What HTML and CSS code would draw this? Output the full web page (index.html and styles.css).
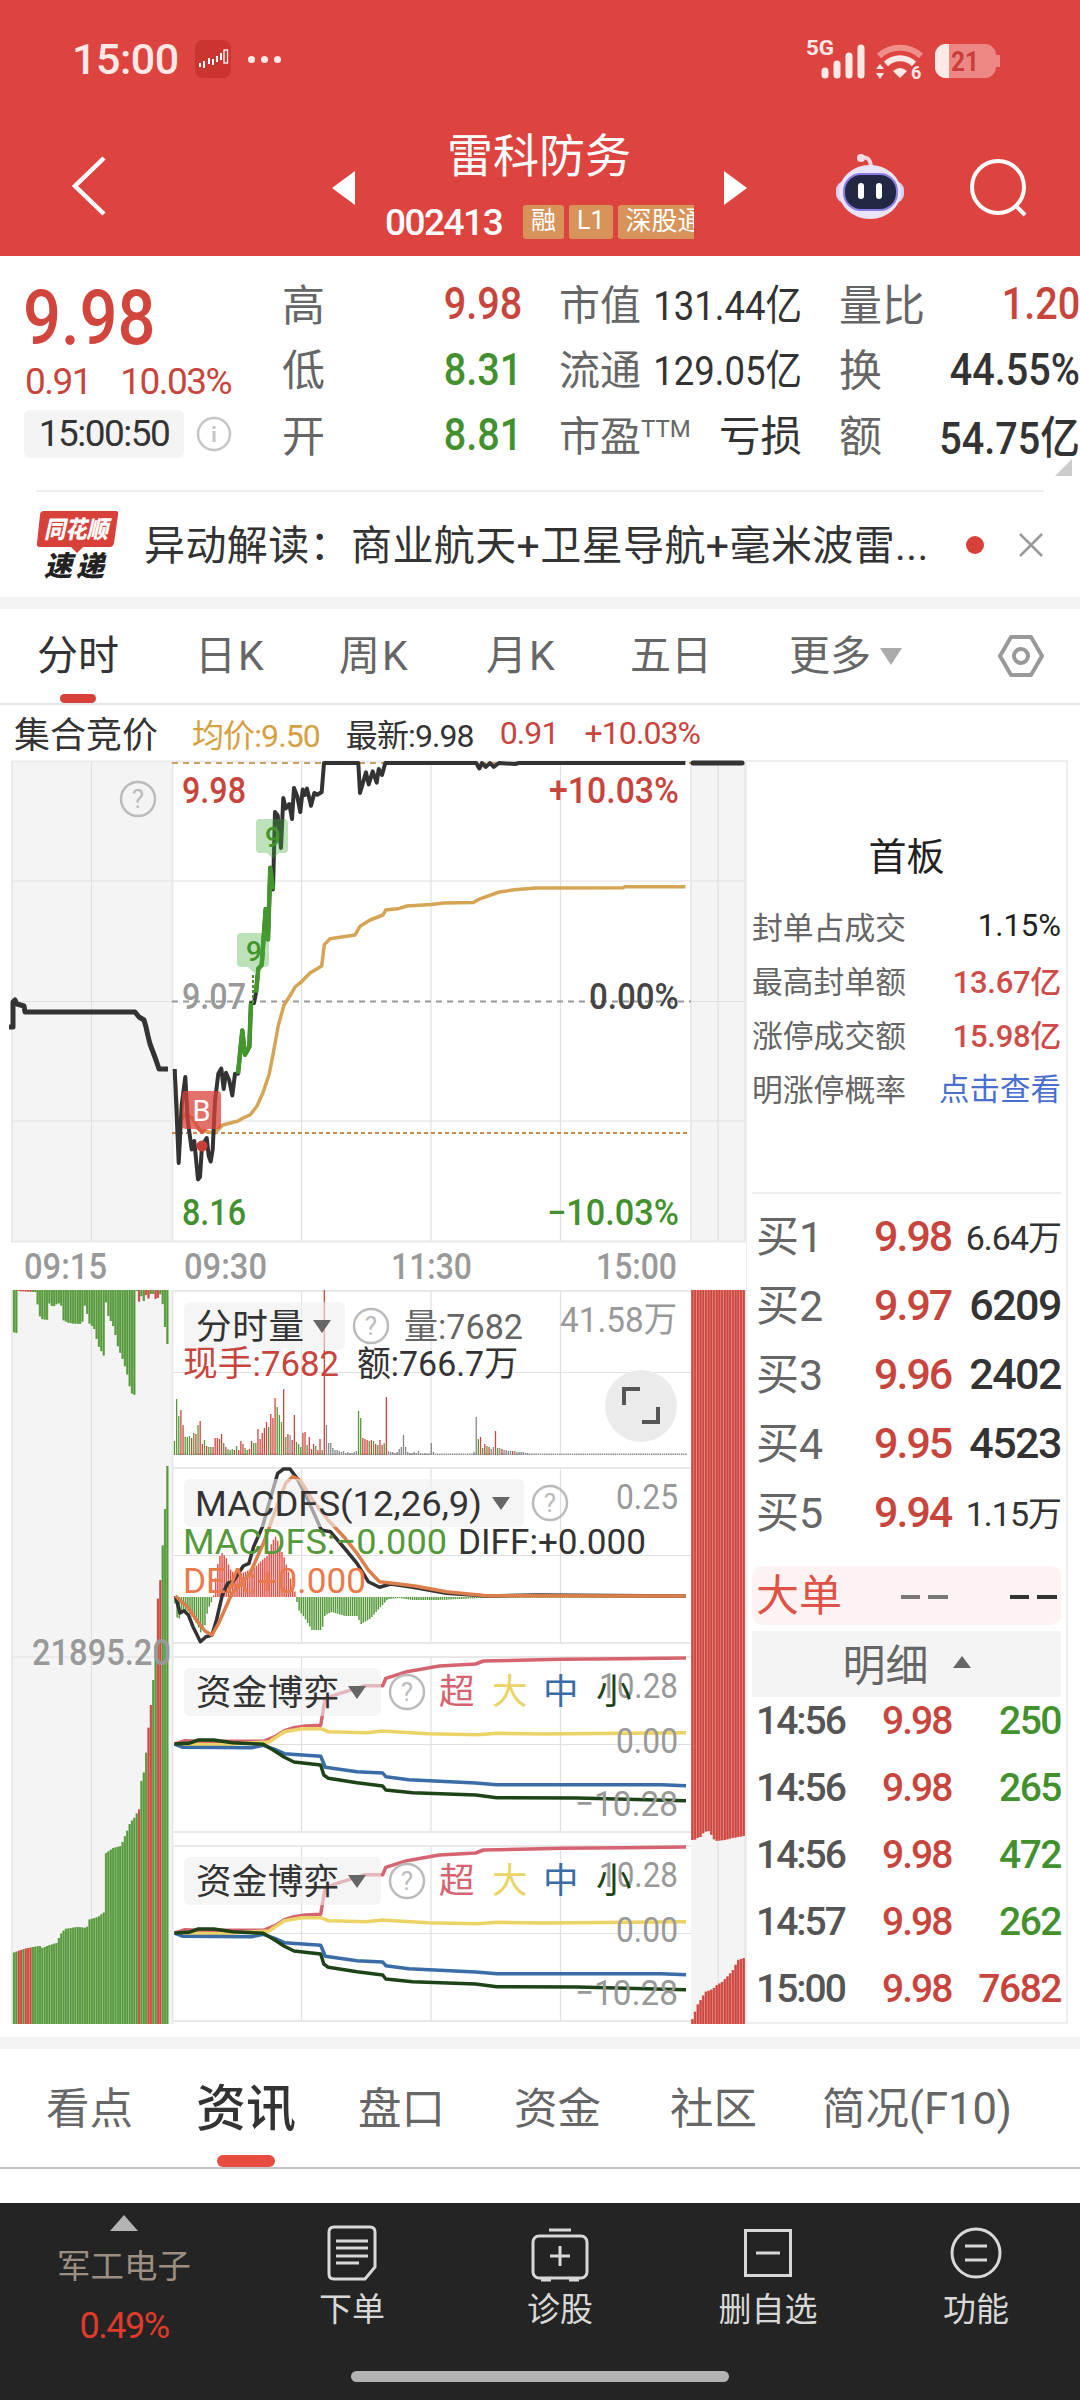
FILE: index.html
```html
<!DOCTYPE html>
<html lang="zh-CN">
<head>
  <meta charset="UTF-8">
  <meta name="viewport" content="width=device-width, initial-scale=1.0">
  <title>雷科防务 002413</title>
  <link rel="stylesheet" href="styles.css">
</head>
<body>
  <header class="header">
    <div class="status">
      <span class="clock">15:00</span>
      <svg class="app-icon" width="36" height="38" viewBox="0 0 36 38">
        <rect width="36" height="38" rx="8" fill="#cb352f"/>
        <path d="M5 23v4M9 21v7M14 18v6M18 19v6M22 16v6M26 13v7" stroke="#fff" stroke-width="2"/>
        <rect x="29" y="10" width="3.500" height="13" fill="none" stroke="#fff" stroke-width="1.300"/>
      </svg>
      <span class="dots"><i></i><i></i><i></i></span>
      <svg class="signals" width="200" height="46" viewBox="804 34 200 46">
        <text x="806" y="53" font-size="21" font-weight="700" fill="#ffe9e7" textLength="28" lengthAdjust="spacingAndGlyphs">5G</text>
        <path d="M825 69v4M837 62v11M849 54v19M861 46v27" stroke="#ffe9e7" stroke-width="7" stroke-linecap="round"/>
        <path d="M879 54a31 31 0 0 1 42 0" stroke="#ee8f8c" stroke-width="6" fill="none"/>
        <path d="M886 62a20 20 0 0 1 28 0" stroke="#ffe9e7" stroke-width="6" fill="none"/>
        <path d="M893 69q7-6 14 0l-7 7zM876 67l4-5 4 5zM876 71l4 6 4-6z" fill="#ffe9e7"/>
        <text x="911" y="77" font-size="18" font-weight="700" fill="#ffe9e7">6</text>
        <path d="M946 42h39a11 11 0 0 1 11 11h4v12h-4a11 11 0 0 1-11 11h-39a11 11 0 0 1-11-11V53a11 11 0 0 1 11-11z" fill="#ed8783"/>
        <path d="M949 42v34h-3a11 11 0 0 1-11-11V53a11 11 0 0 1 11-11z" fill="#ffe9e7"/>
        <text x="951" y="69" font-size="28" font-weight="700" fill="#c93e3a" textLength="28" lengthAdjust="spacingAndGlyphs">21</text>
      </svg>
    </div>
    <div class="title-bar">
      <svg class="back" width="40" height="64" viewBox="0 0 40 64"><path d="M34 4L5 32l29 28" fill="none" stroke="#fff" stroke-width="4.500"/></svg>
      <svg class="prev" width="24" height="34" viewBox="0 0 24 34"><path d="M23 0v34L0 17z" fill="#fff"/></svg>
      <div class="stock">
        <h1>雷科防务</h1>
        <div class="stock-sub">
          <span class="code">002413</span>
          <span class="tags"><b>融</b><b>L1</b><b>深股通</b></span>
        </div>
      </div>
      <svg class="next" width="24" height="34" viewBox="0 0 24 34"><path d="M0 0v34l23-17z" fill="#fff"/></svg>
      <svg class="robot" width="70" height="70" viewBox="0 0 70 70">
        <path d="M26 7q9-3 10 9" stroke="#f3d3e0" stroke-width="4" fill="none"/>
        <circle cx="26" cy="7" r="4" fill="#f6dce4"/>
        <rect x="1" y="30" width="68" height="22" rx="9" fill="#d9d0f6"/>
        <ellipse cx="35" cy="41" rx="31" ry="27" fill="#e9e4fb"/>
        <rect x="9" y="23" width="53" height="36" rx="17" fill="#202844" stroke="#8b7be6" stroke-width="2"/>
        <path d="M26 35v10M44 35v10" stroke="#fff" stroke-width="6" stroke-linecap="round"/>
      </svg>
      <svg class="search" width="62" height="62" viewBox="0 0 62 62">
        <circle cx="30" cy="29" r="26" fill="none" stroke="#fff" stroke-width="4"/>
        <path d="M47 47l10 10" stroke="#fff" stroke-width="4"/>
      </svg>
    </div>
  </header>

  <section class="quote">
    <div class="price-col">
      <div class="price"><span class="num">9.98</span></div>
      <div class="change"><span>0.91</span><span>10.03%</span></div>
      <div class="time-row">
        <span class="time">15:00:50</span>
        <svg width="36" height="36" viewBox="0 0 36 36"><circle cx="18" cy="18" r="16" fill="none" stroke="#c6c6c6" stroke-width="2.500"/><path d="M18 15v11M18 10v3" stroke="#c6c6c6" stroke-width="3"/></svg>
      </div>
    </div>
    <div class="stats">
      <span class="k">高</span><span class="v red"><span class="num">9.98</span></span>
      <span class="k s">市值</span><span class="v m"><span class="num">131.44亿</span></span>
      <span class="k">量比</span><span class="v red"><span class="num">1.20</span></span>
      <span class="k">低</span><span class="v green"><span class="num">8.31</span></span>
      <span class="k s">流通</span><span class="v m"><span class="num">129.05亿</span></span>
      <span class="k">换</span><span class="v"><span class="num">44.55%</span></span>
      <span class="k">开</span><span class="v green"><span class="num">8.81</span></span>
      <span class="k s">市盈<sup>TTM</sup></span><span class="v m">亏损</span>
      <span class="k">额</span><span class="v"><span class="num">54.75亿</span></span>
    </div>
    <i class="corner"></i>
  </section>

  <section class="news">
    <svg width="84" height="70" viewBox="0 0 84 70">
      <path d="M8 1h72q3 0 2 4l-4 28q-1 4-4 4H47l-6 6-6-6H4q-4 0-3-4L4 5q0-4 4-4z" fill="#d8403a"/>
      <text x="8" y="28" font-size="24" font-weight="900" fill="#fff" font-style="italic" textLength="64" lengthAdjust="spacingAndGlyphs">同花顺</text>
      <text x="8" y="66" font-size="28" font-weight="900" fill="#222" font-style="italic" textLength="60">速递</text>
    </svg>
    <p>异动解读：商业航天+卫星导航+毫米波雷...</p>
    <i class="dot"></i>
    <svg class="close" width="26" height="26" viewBox="0 0 26 26"><path d="M2 2l22 22M24 2L2 24" stroke="#999" stroke-width="2.500"/></svg>
  </section>

  <nav class="periods">
    <span class="active">分时</span><span>日K</span><span>周K</span><span>月K</span><span>五日</span><span>更多<i></i></span>
    <svg width="46" height="46" viewBox="0 0 46 46"><path d="M13 4h20l11 19-11 19H13L2 23z" fill="none" stroke="#999" stroke-width="4" stroke-linejoin="round"/><circle cx="23" cy="23" r="7" fill="none" stroke="#999" stroke-width="4"/></svg>
  </nav>

  <div class="legend">
    <span class="auction">集合竞价</span><span class="avg">均价:9.50</span><span>最新:9.98</span><span class="red">0.91</span><span class="red">+10.03%</span>
  </div>

  <main class="board">
    <svg class="chart" width="746" height="1264" viewBox="0 760 746 1264">
      <!-- panel backgrounds and grid -->
      <path d="M11 761h161v481H11zM691 761h55v481h-55zM11 1290h161v734H11zM691 1290h55v734h-55z" fill="#f4f4f4"/>
      <g stroke="#e0e0e0" stroke-width="1.200">
        <path d="M91.500 762v480M301.500 762v480M431 762v480M560.500 762v480M718 762v480M91.500 1290v734M718 1290v734"/>
        <path d="M11 881h735M11 1121h735M11 1001.500h161M690 1001.500h56M172 1372.500h519M172 1555.500h519M11 1657h161M172 1744.500h519M172 1933.500h519"/>
        <path d="M301.500 1290v165M431 1290v165M560.500 1290v165M301.500 1468v175M431 1468v175M560.500 1468v175M301.500 1657v175M431 1657v175M560.500 1657v175M301.500 1846v175M431 1846v175M560.500 1846v175"/>
      </g>
      <g stroke="#e9e9e9" stroke-width="2" fill="none">
        <path d="M11 761.500h735M11 1241.500h735M12 761v481M172.500 761v481M691 761v481M745 761v481"/>
        <path d="M12 1290v734M172.500 1290v734M745 1290v734M172 1291h519M172 1468h519M172 1643h519M172 1657h519M172 1832h519M172 1846h519M172 2021h519"/>
      </g>
      <g id="bars"></g>

      <!-- intraday -->
      <path d="M172 763h519" stroke="#c9a063" stroke-width="2" stroke-dasharray="6 5"/>
      <path d="M172 1001.500h519" stroke="#999" stroke-width="2" stroke-dasharray="6 5"/>
      <path d="M172 1133h517" stroke="#cc8a4c" stroke-width="2" stroke-dasharray="4 3"/>
      <g fill="none" stroke-linejoin="round">
        <path stroke="#333" stroke-width="5" d="M9 1027h4v-25l2-2 2 4 7 2 1 6h110l4 5 5 3 2 7 2 9 2 8 3 8 3 8 3 9h9"/>
        <path stroke="#d6a455" stroke-width="3.500" d="M174.700 1069L178.700 1130 181.700 1120 185 1114 192 1118 200 1130.500 215 1133 222.700 1125 238 1121 243 1118 250 1115 257 1106 263 1092.600 269.300 1073.700 273.300 1053 278.300 1025.500 284 1005 291.700 993 295 987 300.700 982.400 310 973 321.700 966 324.300 944.600 330 938.700 355 935 360 926.300 370 920 383 915 385.700 910 399.400 908.400 406.800 906 431 904.600 444 903 473.400 902.500 480 898.800 499.300 892 514 889.800 536 888 623 887.700 625 886.700 685.400 886.700"/>
        <path stroke="#333" stroke-width="4" d="M174.700 1069L178.700 1163 181.700 1105 185.300 1077 187.700 1120 191.700 1149.500 194.300 1141 198 1179.400 200 1177 202 1146 206.700 1138 208.700 1156 210.700 1161.500 212.700 1149.500 215 1101 218.300 1073.700 221.300 1068.500 223.700 1089 226 1072.700 229.300 1080.600 232.300 1095.400 235 1073.700 238 1073.700 242.300 1030.600 245 1054.800 249.300 1046.800 251 1003 254 1003 256 992.800 258.300 968.700 261.700 965 265.700 909 268 939.400 270.300 867.800 273 889.500 275 812 277.700 815.400 281 848 283.300 798 285.700 808.500 289.300 804 292 819 294 788 297.300 796.500 300.300 812 302.700 789.600 305 795 307 788.600 311 805.800 314.300 793 317.300 794.800 321.700 792 324 763 358.300 763 360 793 366 772.400 368.700 784.400 372.700 771.300 376.700 782.700 378.700 769 382 775 385.300 763 476.300 763 479.300 768.500 482 763 485.600 767 490 763 493.700 767 499 763 515 764 519 763 685.400 763"/>
        <path stroke="#43962c" stroke-width="4.500" d="M238 1073.700L242.300 1030.600 245 1054.800 249.300 1046.800 251 1003M256 992.800L258.300 968.700 261.700 965 265.700 909 268 939.400 270.300 867.800 273 889.500"/>
        <path stroke="#333" stroke-width="5" stroke-linecap="round" d="M693 763h49"/>
        <path stroke="#43962c" stroke-width="2" stroke-dasharray="3 2" d="M253 975v28"/>
      </g>
      <path d="M260 819h24q4 0 4 4v26q0 4-4 4h-5l-6 6-6-6h-7q-4 0-4-4v-26q0-4 4-4zM241 933h24q4 0 4 4v26q0 4-4 4h-5l-6 6-6-6h-7q-4 0-4-4v-26q0-4 4-4z" fill="#43a935" opacity=".35"/>
      <g font-size="28" font-weight="500" fill="#43962c"><text x="265" y="847">9</text><text x="246" y="961">9</text></g>
      <path d="M186 1091h31q4 0 4 4v30q0 4-4 4h-9l-6 5-6-5h-10q-4 0-4-4v-30q0-4 4-4z" fill="#d8403a" opacity=".75"/>
      <circle cx="202" cy="1146" r="5.500" fill="#c93e38"/>
      <text x="192.500" y="1121" font-size="29" fill="#fff">B</text>

      <g class="lbl axis">
        <text x="182" y="803" textLength="64" lengthAdjust="spacingAndGlyphs" fill="#c8453d">9.98</text>
        <text x="549" y="803" textLength="130" lengthAdjust="spacingAndGlyphs" fill="#c8453d">+10.03%</text>
        <text x="182" y="1009" textLength="64" lengthAdjust="spacingAndGlyphs" fill="#999">9.07</text>
        <text x="589" y="1009" textLength="90" lengthAdjust="spacingAndGlyphs" fill="#444">0.00%</text>
        <text x="182" y="1225" textLength="64" lengthAdjust="spacingAndGlyphs" fill="#43902f">8.16</text>
        <text x="547" y="1225" textLength="132" lengthAdjust="spacingAndGlyphs" fill="#43902f">−10.03%</text>
        <text x="24" y="1279" textLength="83" lengthAdjust="spacingAndGlyphs" fill="#999">09:15</text>
        <text x="184" y="1279" textLength="83" lengthAdjust="spacingAndGlyphs" fill="#999">09:30</text>
        <text x="391" y="1279" textLength="81" lengthAdjust="spacingAndGlyphs" fill="#999">11:30</text>
        <text x="596" y="1279" textLength="81" lengthAdjust="spacingAndGlyphs" fill="#999">15:00</text>
        <text x="32" y="1665" textLength="139" lengthAdjust="spacingAndGlyphs" fill="#999">21895.20</text>
      </g>

      <!-- MACD curves -->
      <g fill="none" stroke-width="3.500" stroke-linejoin="round">
        <path stroke="#333" d="M175.400 1596L180 1613 184 1610.700 188.400 1615 193 1626.700 200.400 1641.700 206 1636.700 212 1635 216.500 1620 222.300 1595 227.700 1583.300 233 1581.700 243.300 1566 249 1563.300 253.600 1546.700 262.500 1526.700 270 1500 277.700 1473.300 283.500 1469 290 1469 297 1478.300 308 1500 321.400 1530 330.400 1531.700 346 1550 357 1563.300 368.300 1581.700 379.500 1587.300 390.600 1584 413 1587.300 446.400 1593.300 486.600 1596 535.700 1595 685.700 1596"/>
        <path stroke="#dd7f4c" d="M175.400 1596L187.500 1606.700 198.700 1623.300 205 1631 212 1635 218.800 1623 232 1593.300 250 1573.300 263.400 1543.300 276.800 1506.700 285.700 1483.300 292.400 1476.700 300 1480 312.500 1500 328 1520 343.800 1536.700 357 1553.300 368.300 1570 379.500 1581.700 393 1583.300 415 1586 446.400 1591.700 486.600 1595.700 685.700 1596"/>
      </g>

      <!-- fund flow curves, shared by both panels -->
      <g id="flow" fill="none" stroke-width="3.500" stroke-linejoin="round">
        <path stroke="#d66470" d="M174.500 1744L185 1740.700 198 1741.300 263.300 1741.300 274.800 1736.700 284.400 1730.700 294 1727.700 305.400 1726 320.700 1725.300 323.800 1706.700 325.300 1698.300 340 1693.300 364.700 1685.700 382.700 1685.700 385.800 1678.300 406.800 1671.700 439.400 1666 475.700 1664 483.400 1661 561.800 1659.300 623 1658.700 686 1658"/>
        <path stroke="#ecd365" d="M174.500 1744L217.400 1744.700 269 1742 284.400 1731.700 301.600 1728.700 320.700 1728.700 328.400 1731.700 366.700 1732.700 382 1731 428 1733.700 477.600 1734.700 496.800 1733.300 543 1734 686 1732.700"/>
        <path stroke="#3a6ca8" d="M174.500 1744L183 1747.300 251.800 1747.700 263.300 1745.300 274.800 1749.300 284.400 1753.700 320.700 1756.300 325.300 1767.300 357 1771.700 382.700 1773 385.800 1776.700 408.800 1779.700 475.700 1783 496.800 1784.700 661.300 1784.700 686 1785.700"/>
        <path stroke="#1e4318" d="M174.500 1744L188.700 1743.300 198.300 1740 213.600 1740 232.700 1742.700 263.300 1744.300 274.800 1751 284.400 1757.300 294 1762 320.700 1765 323.800 1775 328.400 1778.300 357 1782.700 382.700 1786 385.800 1790 412.600 1792.700 475.700 1795 496.800 1797.700 577 1798 686 1800.700"/>
      </g>
      <use href="#flow" y="189"/>

      <!-- indicator selectors -->
      <g fill="#eee" fill-opacity=".6">
        <rect x="184" y="1302" width="161" height="48" rx="6"/>
        <rect x="184" y="1479" width="340" height="48" rx="6"/>
        <rect x="184" y="1668" width="197" height="48" rx="6"/>
        <rect x="184" y="1857" width="197" height="48" rx="6"/>
      </g>
      <path d="M313 1320h18l-9 13zM492 1497h18l-9 13zM348 1686h18l-9 13zM348 1875h18l-9 13z" fill="#666"/>
      <g fill="none" stroke="#bbb" stroke-width="2.500">
        <circle cx="138" cy="799" r="17"/><circle cx="371" cy="1326" r="17"/><circle cx="550" cy="1503" r="17"/><circle cx="407" cy="1692" r="17"/><circle cx="407" cy="1881" r="17"/>
      </g>
      <g font-size="26" fill="#bbb" text-anchor="middle">
        <text x="138" y="808">?</text><text x="371" y="1335">?</text><text x="550" y="1512">?</text><text x="407" y="1701">?</text><text x="407" y="1890">?</text>
      </g>
      <g class="lbl">
        <text x="196" y="1339" textLength="108" fill="#333">分时量</text>
        <text x="404" y="1339" textLength="119" lengthAdjust="spacingAndGlyphs" fill="#666">量:7682</text>
        <text x="560" y="1332" textLength="117" lengthAdjust="spacingAndGlyphs" fill="#999">41.58万</text>
        <text x="183" y="1376" textLength="156" lengthAdjust="spacingAndGlyphs" fill="#c8453d">现手:7682</text>
        <text x="357" y="1376" textLength="161" lengthAdjust="spacingAndGlyphs" fill="#333">额:766.7万</text>
        <text x="195" y="1516" textLength="287" lengthAdjust="spacingAndGlyphs" fill="#333">MACDFS(12,26,9)</text>
        <text x="616" y="1509" textLength="62" lengthAdjust="spacingAndGlyphs" fill="#999">0.25</text>
        <text x="183" y="1554" textLength="264" lengthAdjust="spacingAndGlyphs" fill="#55993a">MACDFS:−0.000</text>
        <text x="458" y="1554" textLength="188" lengthAdjust="spacingAndGlyphs" fill="#333">DIFF:+0.000</text>
        <text x="183" y="1593" textLength="183" lengthAdjust="spacingAndGlyphs" fill="#ea7a4b">DEA:+0.000</text>
      </g>
      <g id="flow-text" class="lbl">
        <text x="196" y="1705" textLength="143" fill="#333">资金博弈</text>
        <text x="599" y="1698" textLength="79" lengthAdjust="spacingAndGlyphs" fill="#999">10.28</text>
        <text x="616" y="1753" textLength="62" lengthAdjust="spacingAndGlyphs" fill="#999">0.00</text>
        <text x="575" y="1816" textLength="103" lengthAdjust="spacingAndGlyphs" fill="#999">−10.28</text>
        <text x="439" y="1704" fill="#d66470">超</text>
        <text x="492" y="1704" fill="#ecd365">大</text>
        <text x="543" y="1704" fill="#3a6ca8">中</text>
        <text x="596" y="1704" fill="#1e4318">小</text>
      </g>
      <use href="#flow-text" y="189"/>
      <circle cx="641" cy="1406" r="36" fill="#ebebeb"/>
      <path d="M640 1389h-16v16M642 1422h16v-15" fill="none" stroke="#555" stroke-width="4"/>
    </svg>

    <aside class="side">
      <h2>首板</h2>
      <dl>
        <div><dt>封单占成交</dt><dd>1.15%</dd></div>
        <div><dt>最高封单额</dt><dd class="red">13.67亿</dd></div>
        <div><dt>涨停成交额</dt><dd class="red">15.98亿</dd></div>
        <div><dt>明涨停概率</dt><dd class="link">点击查看</dd></div>
      </dl>
      <div class="bids">
        <div><span>买1</span><b>9.98</b><em class="wan">6.64万</em></div>
        <div><span>买2</span><b>9.97</b><em>6209</em></div>
        <div><span>买3</span><b>9.96</b><em>2402</em></div>
        <div><span>买4</span><b>9.95</b><em>4523</em></div>
        <div><span>买5</span><b>9.94</b><em class="wan">1.15万</em></div>
      </div>
      <div class="big-order"><span>大单</span><i class="dash"></i><i class="dash dark"></i></div>
      <div class="detail-head">明细<i></i></div>
      <div class="ticks">
        <div><span>14:56</span><b>9.98</b><em class="green">250</em></div>
        <div><span>14:56</span><b>9.98</b><em class="green">265</em></div>
        <div><span>14:56</span><b>9.98</b><em class="green">472</em></div>
        <div><span>14:57</span><b>9.98</b><em class="green">262</em></div>
        <div><span>15:00</span><b>9.98</b><em class="red">7682</em></div>
      </div>
    </aside>
  </main>

  <nav class="sections">
    <span>看点</span><span class="active">资讯</span><span>盘口</span><span>资金</span><span>社区</span><span>简况(F10)</span>
  </nav>

  <footer class="toolbar">
    <div class="index"><i></i><span>军工电子</span><b>0.49%</b></div>
    <div class="item">
      <svg width="60" height="60" viewBox="0 0 60 60"><path d="M12 4h36q5 0 5 5v35L43 56H12q-5 0-5-5V9q0-5 5-5z"/><path d="M14 18h32M14 25h32M14 33h32M14 40h23"/></svg>
      <span>下单</span>
    </div>
    <div class="item">
      <svg width="60" height="60" viewBox="0 0 60 60"><rect x="3" y="13" width="54" height="42" rx="6"/><path d="M19 7h22M30 23v20M20 33h20M11 57h10M39 57h10"/></svg>
      <span>诊股</span>
    </div>
    <div class="item">
      <svg width="60" height="60" viewBox="0 0 60 60"><rect x="7.500" y="7.500" width="45" height="45"/><path d="M18 30h24"/></svg>
      <span>删自选</span>
    </div>
    <div class="item">
      <svg width="60" height="60" viewBox="0 0 60 60"><circle cx="30" cy="30" r="24"/><path d="M19 23h22M19 37h22"/></svg>
      <span>功能</span>
    </div>
    <i class="home"></i>
  </footer>
  <script src="script.js"></script>
</body>
</html>
```
FILE: styles.css
```css
* {
  box-sizing: border-box;
}
body {
  margin: 0;
  width: 1080px;
  background: #fff;
  color: #333;
  font-family: Roboto, "Noto Sans CJK SC", sans-serif;
  white-space: nowrap;
}
h1, h2, p, dl, dd {
  margin: 0;
  font-weight: 400;
}
i, em {
  font-style: normal;
}
svg {
  display: block;
  flex: none;
}
.red {
  color: #c8453d;
}
.green {
  color: #43902f;
}
.num {
  display: inline-block;
  transform: scaleX(0.88);
  transform-origin: right center;
}

/* header */
.header {
  height: 256px;
  background: #dd4440;
  color: #fff;
}
.status {
  display: flex;
  align-items: center;
  height: 118px;
  padding: 0 76px 0 72px;
}
.clock {
  width: 123px;
  font-size: 43px;
  font-weight: 500;
  letter-spacing: -0.5px;
  color: #ffe9e7;
}
.dots {
  display: flex;
  gap: 6px;
  margin-left: 17px;
}
.dots i {
  width: 7px;
  height: 7px;
  border-radius: 50%;
  background: #ffe9e7;
}
.signals {
  margin-left: auto;
}
.title-bar {
  display: flex;
  padding-left: 70px;
}
.back {
  margin-top: 36px;
}
.prev {
  margin: 53px 0 0 222px;
}
.stock {
  width: 368px;
  padding-left: 29px;
}
.stock h1 {
  margin-top: 3px;
  font-size: 46px;
  line-height: 70px;
  padding-left: 62px;
}
.stock-sub {
  display: flex;
  align-items: center;
  height: 62px;
}
.code {
  width: 138px;
  font-size: 37px;
  font-weight: 500;
  letter-spacing: -1.5px;
}
.tags {
  display: flex;
  gap: 5px;
  width: 171px;
  overflow: hidden;
}
.tags b {
  flex: none;
  min-width: 41px;
  height: 34px;
  padding: 0 8px;
  border-radius: 3px;
  background: #d8935a;
  font-size: 25px;
  font-weight: 400;
  line-height: 32px;
  text-align: center;
}
.tags b:last-child {
  font-size: 26px;
}
.next {
  margin-top: 53px;
}
.robot {
  margin: 33px 0 0 87px;
}
.search {
  margin: 40px 0 0 63px;
}

/* quote */
.quote {
  position: relative;
  display: flex;
  height: 234px;
  padding: 16px 0 0 26px;
}
.price-col {
  width: 256px;
}
.price {
  height: 90px;
  margin-left: -3px;
  color: #d2453c;
  font-size: 76px;
  font-weight: 500;
  line-height: 92px;
}
.price .num {
  transform-origin: left center;
}
.change {
  display: flex;
  gap: 29px;
  height: 46px;
  margin-left: -1px;
  color: #c8453d;
  font-size: 37px;
  line-height: 40px;
  letter-spacing: -1.5px;
}
.time-row {
  display: flex;
  align-items: center;
  gap: 12px;
  margin: 2px 0 0 -2px;
}
.time {
  width: 160px;
  height: 48px;
  border-radius: 6px;
  background: #f4f4f4;
  font-size: 37px;
  line-height: 48px;
  text-align: center;
  letter-spacing: -1.5px;
}
.stats {
  display: grid;
  grid-template-columns: 90px 150px 124px 156px 92px 186px;
  grid-auto-rows: 65.500px;
  width: 798px;
  align-items: center;
}
.stats .k {
  margin-top: -6px;
  color: #666;
  font-size: 43px;
}
.stats .k:nth-child(6n + 3) {
  margin-left: 37px;
}
.stats .k:nth-child(6n + 5) {
  margin-left: 37px;
}
.stats .k.s {
  font-size: 41px;
}
.stats .v {
  display: flex;
  justify-content: flex-end;
  margin-top: -2px;
  font-size: 45px;
  font-weight: 500;
}
.stats .v.m {
  margin-top: -6px;
  font-size: 41.500px;
  font-weight: 400;
}
.stats sup {
  font-size: 24px;
  vertical-align: 14px;
  line-height: 0;
}
.corner {
  position: absolute;
  right: 8px;
  bottom: 14px;
  border-left: 17px solid transparent;
  border-bottom: 17px solid #ccc;
}

/* news */
.news {
  display: flex;
  align-items: center;
  height: 107px;
  margin: 0 36px;
  border-top: 2px solid #eee;
}
.news p {
  width: 818px;
  margin: -6px 0 0 24px;
  font-size: 41px;
  letter-spacing: 0.4px;
}
.dot {
  width: 18px;
  height: 18px;
  margin-left: 6px;
  border-radius: 50%;
  background: #d8403a;
}
.close {
  margin-left: 34px;
}

/* period tabs */
.periods {
  display: flex;
  align-items: center;
  height: 108px;
  border-top: 12px solid #f4f4f4;
  border-bottom: 2px solid #e6e6e6;
  padding-left: 37px;
  color: #666;
  font-size: 41px;
}
.periods span {
  position: relative;
  width: 144px;
  line-height: 94px;
}
.periods span:first-child {
  width: 158px;
}
.periods span:nth-child(2), .periods span:nth-child(3), .periods span:nth-child(4) {
  letter-spacing: 2px;
}
.periods span:nth-child(3) {
  width: 147px;
}
.periods span:nth-child(5) {
  width: 159px;
}
.periods span:nth-child(6) {
  display: flex;
  align-items: center;
  gap: 9px;
  width: 209px;
}
.periods span i {
  border: 11px solid transparent;
  border-top: 17px solid #aaa;
  border-bottom: 0;
}
.active {
  color: #333;
}
.periods .active::after {
  content: "";
  position: absolute;
  left: 23px;
  bottom: 0;
  width: 36px;
  height: 9px;
  border-radius: 5px;
  background: #d8403a;
}

.legend {
  display: flex;
  align-items: center;
  height: 55px;
  padding-left: 14px;
  font-size: 32px;
  letter-spacing: -0.9px;
}
.legend span {
  margin-right: 26px;
}
.legend .auction {
  width: 152px;
  font-size: 36px;
  letter-spacing: 0;
  margin-top: -2px;
}
.legend .avg {
  color: #d6a040;
}

/* chart and order book */
.board {
  display: flex;
  height: 1277px;
}
.lbl {
  font-size: 35.500px;
}
.axis {
  font-size: 36px;
  font-weight: 500;
}
.side {
  width: 322px;
  height: 1264px;
  padding: 0 5px;
  border: 2px solid #eee;
  border-left-width: 1px;
}
.side h2 {
  height: 136px;
  padding-top: 65px;
  color: #222;
  font-size: 38px;
  line-height: 60px;
  text-align: center;
}
.side dl div {
  display: flex;
  align-items: center;
  justify-content: space-between;
  height: 54px;
}
.side dt {
  color: #666;
  font-size: 30.800px;
}
.side dd {
  font-size: 31px;
  color: #222;
}
.side dd.red {
  color: #d04a48;
  font-weight: 500;
  letter-spacing: -0.3px;
}
.side dd.link {
  color: #4a6fd0;
  font-size: 30.500px;
}
.bids {
  margin-top: 78px;
  padding-top: 7px;
  border-top: 2px solid #eee;
}
.bids div, .ticks div {
  display: flex;
  align-items: center;
  height: 69px;
  padding-left: 4px;
}
.bids span {
  width: 118px;
  margin-top: -5px;
  color: #666;
  font-size: 43px;
}
.bids b, .ticks b {
  width: 82px;
  color: #c8453d;
  font-size: 43px;
  font-weight: 500;
  letter-spacing: -2px;
}
.bids em, .ticks em {
  margin-left: auto;
  font-size: 43px;
  font-weight: 500;
  letter-spacing: -1.5px;
}
.bids em.wan {
  font-size: 34px;
  letter-spacing: -1px;
  font-weight: 400;
}
.big-order {
  display: flex;
  align-items: center;
  height: 59px;
  margin-top: 20px;
  padding: 0 4px;
  border-radius: 10px;
  background: #fef3f3;
  color: #df5247;
  font-size: 43px;
}
.big-order span {
  margin-top: -8px;
}
.big-order .dash {
  width: 47px;
  height: 4px;
  margin: 2px 0 0 59px;
  background: linear-gradient(90deg, #777 19px, transparent 19px, transparent 27px, #777 27px);
}
.big-order .dash.dark {
  margin-left: auto;
  background: linear-gradient(90deg, #333 19px, transparent 19px, transparent 27px, #333 27px);
}
.detail-head {
  display: flex;
  align-items: center;
  justify-content: center;
  gap: 24px;
  height: 66px;
  margin-top: 6px;
  padding-bottom: 5px;
  background: #f4f4f4;
  color: #666;
  font-size: 43px;
}
.detail-head i {
  border: 9px solid transparent;
  border-bottom: 12px solid #666;
  border-top: 0;
}
.ticks {
  margin-top: -10px;
}
.ticks div {
  height: 67px;
}
.ticks span {
  width: 126px;
  color: #555;
  font-size: 39px;
  letter-spacing: -2px;
  font-weight: 500;
}
.ticks b, .ticks em {
  font-size: 39px;
}

/* section tabs */
.sections {
  display: flex;
  align-items: center;
  height: 132px;
  border-top: 12px solid #f4f4f4;
  border-bottom: 2px solid #c4c4c4;
  padding-left: 46px;
  color: #666;
  font-size: 43.500px;
}
.sections span {
  position: relative;
  width: 156px;
  height: 118px;
  line-height: 121px;
}
.sections span:first-child {
  width: 150px;
}
.sections .active {
  width: 162px;
  font-size: 50px;
  font-weight: 500;
}
.sections span:nth-child(5) {
  width: 152px;
}
.sections .active::after {
  content: "";
  position: absolute;
  left: 21px;
  bottom: 0;
  width: 58px;
  height: 12px;
  border-radius: 6px;
  background: #e64c3f;
}

/* bottom toolbar */
.toolbar {
  position: relative;
  display: flex;
  height: 197px;
  margin-top: 34px;
  background: #242424;
  color: #d8d8d8;
}
.index {
  display: flex;
  flex-direction: column;
  align-items: center;
  width: 248px;
  padding: 12px 0 0;
}
.index i {
  border: 14px solid transparent;
  border-bottom: 16px solid #b3b3b3;
  border-top: 0;
}
.index span {
  margin-top: 11px;
  color: #9c8f82;
  font-size: 33.500px;
  line-height: 50px;
}
.index b {
  margin-top: 11px;
  color: #e03a2b;
  font-size: 36px;
  font-weight: 400;
  line-height: 46px;
  letter-spacing: -1.5px;
}
.item {
  display: flex;
  flex-direction: column;
  align-items: center;
  width: 208px;
  padding-top: 20px;
  font-size: 33px;
  line-height: 54px;
}
.item svg {
  fill: none;
  stroke: #d8d8d8;
  stroke-width: 3;
}
.home {
  position: absolute;
  left: 351px;
  bottom: 18px;
  width: 378px;
  height: 11px;
  border-radius: 6px;
  background: #b3b3b3;
}
```
FILE: script.js
```js
const bars = document.getElementById('bars');
const GREEN = '#55993a', RED = '#cf453d', GRAY = '#888';

function draw(d, color, width, opacity) {
  const p = document.createElementNS('http://www.w3.org/2000/svg', 'path');
  p.setAttribute('d', d);
  p.setAttribute('stroke', color);
  p.setAttribute('stroke-width', width);
  if (opacity) p.setAttribute('stroke-opacity', opacity);
  bars.appendChild(p);
}

// value at x from [x, y] pairs
function lerp(pts, x) {
  for (let i = 1; i < pts.length; i++) {
    if (x <= pts[i][0]) {
      const [x0, y0] = pts[i - 1], [x1, y1] = pts[i];
      return y0 + (y1 - y0) * Math.max(0, x - x0) / (x1 - x0);
    }
  }
  return pts[pts.length - 1][1];
}

// bars from a fixed base to the profile, stripes over a lighter fill
function profile(pts, base, from, to, step, colorAt) {
  for (let x = from; x <= to; x += step) {
    const d = `M${x} ${base}V${lerp(pts, x).toFixed(1)}`;
    draw(d, colorAt(x), step, 0.75);
    draw(d, colorAt(x), step * 0.6);
  }
}
const inside = (x, list) => list.some(r => x >= r[0] && x <= r[1]);

// auction: unmatched volume
profile([[13, 1332], [17, 1333], [18, 1291], [36, 1292], [39, 1315], [42, 1319], [47, 1320], [49, 1303], [53, 1307], [58, 1303], [61, 1304], [63, 1320], [69, 1323], [80, 1324], [83, 1321], [84, 1304], [86, 1308], [89, 1323], [94, 1328], [98, 1345], [104, 1356], [105, 1356], [106, 1302], [108, 1315], [114, 1328], [118, 1347], [123, 1360], [127, 1373], [131, 1393], [135, 1395], [136, 1291], [138, 1291], [139, 1302], [141, 1293], [143, 1307], [145, 1292], [148, 1300], [150, 1294], [154, 1294], [157, 1303], [159, 1292], [162, 1297], [164, 1318], [167, 1344]],
  1290, 14, 168, 2.36, x => inside(x, [[18, 31], [137, 141], [146, 149], [155, 159]]) ? RED : GREEN);
// auction: matched volume
profile([[13, 1953], [18, 1951], [24, 1949], [33, 1947], [40, 1946], [42, 1948], [50, 1945], [57, 1943], [60, 1935], [65, 1929], [77, 1927], [87, 1928], [88, 1920], [98, 1917], [104.500, 1912], [105, 1854], [113, 1848], [121, 1846], [125, 1836], [128, 1829], [130, 1823], [135, 1817], [138, 1811], [140, 1808], [141, 1782], [143, 1777], [145, 1766], [147, 1743], [150, 1713], [152, 1695], [154, 1671], [156, 1639], [158, 1598], [161, 1575], [163, 1540], [165, 1510], [167, 1466]],
  2024, 14, 168, 2.36, x => inside(x, [[17, 22], [25, 32], [137.500, 140], [147, 151], [156, 161]]) ? RED : GREEN);
// after close
profile([[691, 1838], [693, 1841], [697, 1838], [701, 1837], [704, 1832], [709, 1831], [712, 1836], [715, 1841], [725, 1840], [732, 1838], [738, 1837], [744, 1836]],
  1290, 692.4, 744, 2.7, () => RED);
profile([[691, 2023], [695, 2012], [698, 2004], [702, 1998], [705, 1992], [708, 1991], [713, 1989], [717, 1985], [722, 1982], [728, 1976], [733, 1970], [738, 1960], [744, 1958]],
  2024, 692.4, 744, 2.7, () => RED);

// minute volume, g/r/k + height, starting at minute n
const volume = {
  0: 'g14 g56 g39 r45 r30 g18 g18 g19 r17 g22 r21 g30 r34 r11 g15 r9 g8 g8 r8 r17 r17 r16 r21 g12 r8 g6 g5 g6 r5 g9 r5 r14 r11 g7 g5 r6 r14 g12 g12 r26 r16 r22 r27 r33 g28 r41 r37 r57 g48 g40 g33 r66 g18 r21 k20 r15 r40 g13 g11 g8 r22 r23 g10 r18 r6 r11 g9 r5 r16 g5 r165 k30 k12 k12 k7 k5 k5 k4 k3 k4 k2 k3 k2 k2 k3 k4',
  86: 'g44 g37 r17 r16 r15 g14 r15 g14 r11 g10 r15 r10 g12 r58 k4 k3 k3 k2 k3 k6 k8 k20 k8 k3 k2 k2 k3 k2 k4 k2 k1 k2 k1 k1 k12 k3',
  140: 'k3 k38 g16 r18 g7 r11 g9 r8 k6 k8 r24 g7 k7 r6 k5 k5 k4 k4 r4 k4 k3 k3 k3 k3 k2 k2'
};
for (let i = 0; i < 240; i++) draw(`M${174.500 + i * 2.14} 1455v-1.5`, GRAY, 1.4);
for (const start in volume) {
  volume[start].split(' ').forEach((v, i) => {
    const color = { g: GREEN, r: RED, k: GRAY }[v[0]];
    draw(`M${174.500 + (+start + i) * 2.14} 1455v-${v.slice(1)}`, color, 1.3);
  });
}

// MACD histogram
const macd = [[174, 0], [178, 26], [182, 12], [188, 14], [196, 25], [201, 36], [205, 28], [208, 12], [213, 2], [214, -5], [217, -30], [221, -45], [226, -40], [230, -28], [236, -22], [245, -25], [255, -30], [260, -35], [268, -42], [272, -55], [276, -61], [280, -50], [284, -40], [290, -20], [296, -2], [298, 12], [304, 20], [312, 33], [322, 33], [325, 18], [332, 15], [345, 19], [357, 19], [361, 27], [370, 22], [378, 13], [388, 2], [400, 1], [412, 3], [440, 3], [480, 1], [686, 1]];
for (let x = 175; x < 686; x += 2.14) {
  const h = lerp(macd, x);
  draw(`M${x} 1597v${h.toFixed(1)}`, h < 0 ? '#e0544c' : GREEN, 1.5);
}
```
